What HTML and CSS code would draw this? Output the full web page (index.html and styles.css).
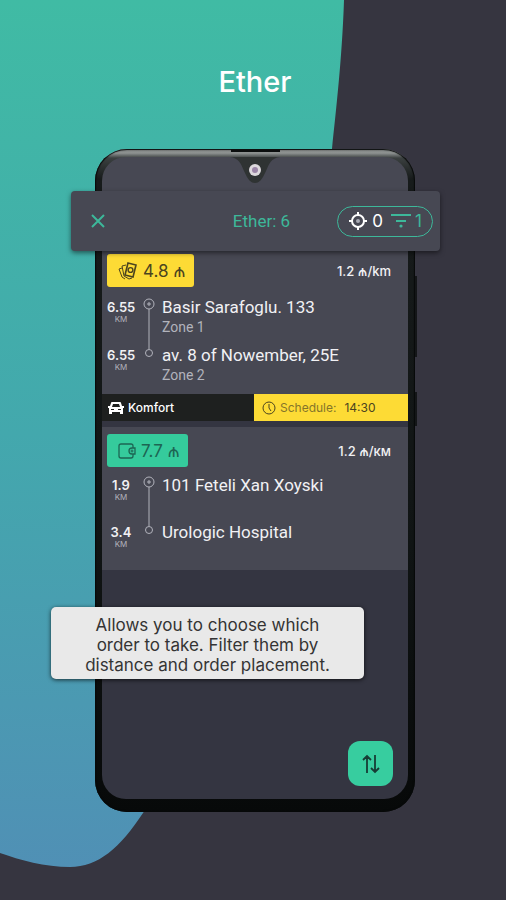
FILE: index.html
```html
<!DOCTYPE html>
<html lang="en">
<head>
    <meta charset="UTF-8">
    <meta name="viewport" content="width=device-width, initial-scale=1.0">
    <title>Ether</title>
    <link rel="stylesheet" href="styles.css">
</head>
<body>
    <!-- Background shape -->
    <svg class="backdrop" viewBox="0 0 506 900" preserveAspectRatio="none" aria-hidden="true">
        <defs>
            <linearGradient id="sea" x1="0" y1="0" x2="0" y2="1">
                <stop offset="0" stop-color="#40bba4"/>
                <stop offset="0.5" stop-color="#43a8ad"/>
                <stop offset="1" stop-color="#5090b5"/>
            </linearGradient>
        </defs>
        <path fill="url(#sea)" d="M0 0H344C342 60 336 110 332 149C300 450 200 740 143 813C120 848 98 867 70 867C45 867 20 860 0 853Z"/>
    </svg>

    <main class="page">
        <h1>Ether</h1>

        <div class="phone">
            <svg class="notch" viewBox="0 0 60 36" aria-hidden="true">
                <path fill="#2f3333" d="M5 8C14 9 16 15 19 22C23 31 26 34 30 34S37 31 41 22C44 15 46 9 55 8Z"/>
                <rect x="6" y="0" width="49" height="3" fill="#0c0f0f"/>
                <circle cx="30" cy="21" r="6" fill="#dcd8dc"/>
                <circle cx="30" cy="21" r="3" fill="#9a84a6"/>
            </svg>

            <div class="screen">
                <!-- Top Bar -->
                <header class="top-bar">
                    <button class="close" aria-label="Close">
                        <svg width="14" height="14" viewBox="0 0 14 14"><path d="M1 1L13 13M13 1L1 13" stroke="currentColor" stroke-width="2"/></svg>
                    </button>
                    <h2>Ether: 6</h2>
                    <button class="filter">
                        <svg width="20" height="20" viewBox="0 0 20 20" fill="none" stroke="#fff">
                            <circle cx="10" cy="10" r="6" stroke-width="2"/>
                            <path d="M10 1V5M10 15V19M1 10H5M15 10H19" stroke-width="2"/>
                            <circle cx="10" cy="10" r="2" fill="#a9abb5" stroke="none"/>
                        </svg>
                        <span class="near">0</span>
                        <svg class="funnel" width="20" height="16" viewBox="0 0 20 16" fill="none" stroke="currentColor" stroke-width="2">
                            <path d="M0 2H20M5 8H15"/><circle cx="10" cy="13" r="1.6" fill="currentColor" stroke="none"/>
                        </svg>
                        <span>1</span>
                    </button>
                </header>

                <!-- Orders -->
                <article class="order">
                    <div class="order-head">
                        <span class="price cash">
                            <svg width="20" height="20" viewBox="0 0 20 20" fill="none" stroke="currentColor">
                                <path d="M10 2L18 4L15 16L7 14Z" stroke-width="1.6"/>
                                <circle cx="12.5" cy="9" r="2.4" stroke-width="1.4"/>
                                <path d="M8 4L4 5L6 15L11 18L14 17M4 7L1 8L4 16L7 18" stroke-width="1"/>
                            </svg>
                            4.8 ₼
                        </span>
                        <span class="rate">1.2 ₼/km</span>
                    </div>
                    <div class="route">
                        <div class="distances">
                            <p>6.55<small>KM</small></p>
                            <p>6.55<small>KM</small></p>
                        </div>
                        <svg class="track" width="12" height="60" viewBox="0 0 12 60" fill="none" stroke="currentColor">
                            <circle cx="6" cy="6" r="5"/><path d="M6 4V8M4 6H8M6 11V51"/><circle cx="6" cy="55" r="3.5"/>
                        </svg>
                        <div class="stops">
                            <p>Basir Sarafoglu. 133<small>Zone 1</small></p>
                            <p>av. 8 of Nowember, 25E<small>Zone 2</small></p>
                        </div>
                    </div>
                </article>

                <div class="service">
                    <span class="tariff">
                        <svg width="16" height="14" viewBox="0 0 16 14" fill="currentColor">
                            <path fill-rule="evenodd" d="M4 1H12Q13 1 13 2L14 5H16V7H15V13H12V11H4V13H1V7H0V5H2L3 2Q3 1 4 1ZM5 3L4 6H12L11 3ZM3 8V9H6V8ZM10 8V9H13V8Z"/>
                        </svg>
                        Komfort
                    </span>
                    <span class="schedule">
                        <svg width="14" height="14" viewBox="0 0 14 14" fill="none" stroke="currentColor">
                            <circle cx="7" cy="7" r="6"/><path d="M7 3V7L9 10"/>
                        </svg>
                        <span>Schedule:</span>
                        <time>14:30</time>
                    </span>
                </div>

                <article class="order card-order">
                    <div class="order-head">
                        <span class="price card">
                            <svg width="18" height="16" viewBox="0 0 18 16" fill="none" stroke="currentColor">
                                <path d="M15 5V3Q15 1 13 1H3Q1 1 1 3V13Q1 15 3 15H13Q15 15 15 13V11M17 5H14Q11 5 11 8T14 11H17Z" stroke-width="1.3"/>
                                <circle cx="14" cy="8" r="1"/>
                            </svg>
                            7.7 ₼
                        </span>
                        <span class="rate">1.2 ₼/км</span>
                    </div>
                    <div class="route">
                        <div class="distances">
                            <p>1.9<small>KM</small></p>
                            <p>3.4<small>KM</small></p>
                        </div>
                        <svg class="track" width="12" height="60" viewBox="0 0 12 60" fill="none" stroke="currentColor">
                            <circle cx="6" cy="6" r="5"/><path d="M6 4V8M4 6H8M6 11V50"/><circle cx="6" cy="54" r="3.5"/>
                        </svg>
                        <div class="stops">
                            <p>101 Feteli Xan Xoyski</p>
                            <p>Urologic Hospital</p>
                        </div>
                    </div>
                </article>

                <button class="sort" aria-label="Sort orders">
                    <svg width="18" height="20" viewBox="0 0 18 20" fill="none" stroke="currentColor" stroke-width="1.8">
                        <path d="M5 19V2M1 6L5 2L9 6M13 1V18M9 14L13 18L17 14"/>
                    </svg>
                </button>
            </div>

            <p class="caption">Allows you to choose which<br>order to take. Filter them by<br>distance and order placement.</p>
        </div>
    </main>
</body>
</html>
```
FILE: styles.css
```css
/* Global Reset */
* {
    margin: 0;
    padding: 0;
    box-sizing: border-box;
}

body {
    position: relative;
    min-height: 100vh;
    background-color: #363540;
    color: #fff;
    font-family: 'Inter', 'Liberation Sans', sans-serif;
}

button {
    border: none;
    background: none;
    font: inherit;
    color: inherit;
    cursor: pointer;
}

svg {
    display: block;
    flex-shrink: 0;
}

small {
    display: block;
}

.backdrop {
    position: absolute;
    top: 0;
    left: 0;
    width: 100%;
    height: 100%;
}

.page {
    position: relative;
    padding: 64px 91px 88px 95px;
}

h1 {
    margin-bottom: 49px;
    font-size: 29px;
    font-weight: 500;
    line-height: 36px;
    text-align: center;
}

/* Phone */
.phone {
    position: relative;
    padding: 8px 7px 13px;
    border-radius: 32px;
    background: linear-gradient(#7d8180 0, #8f9392 4px, #3b4040 9px, #171b1b 30px, #101414 60%, #070909 100%);
    box-shadow: inset 0 0 1px 1px #070909;
}

/* Side keys */
.phone::before,
.phone::after {
    content: "";
    position: absolute;
    right: -2px;
    width: 2px;
    background-color: #141618;
}

.phone::before {
    top: 127px;
    height: 81px;
}

.phone::after {
    top: 243px;
    height: 34px;
}

.notch {
    position: absolute;
    top: 0;
    left: 50%;
    width: 60px;
    margin-left: -30px;
    z-index: 1;
}

.screen {
    display: flex;
    flex-direction: column;
    min-height: 642px;
    padding-top: 34px;
    border-radius: 24px;
    background: linear-gradient(#474853 100px, #343541 100px);
}

/* Top Bar */
.top-bar {
    position: relative;
    display: grid;
    grid-template-columns: 1fr auto 1fr;
    align-items: center;
    height: 60px;
    margin: 0 -32px 0 -31px;
    padding: 0 7px 0 19px;
    border-radius: 4px;
    background-color: #474853;
    box-shadow: 0 2px 5px rgba(0, 0, 0, 0.5);
    color: #3db89a;
}

.close {
    justify-self: start;
    padding: 1px;
}

.top-bar h2 {
    font-family: 'Roboto', sans-serif;
    font-size: 17px;
    font-weight: 400;
}

.filter {
    display: flex;
    align-items: center;
    justify-self: end;
    gap: 4px;
    height: 31px;
    padding: 0 10px;
    border: 1px solid #3db89a;
    border-radius: 16px;
    font-size: 17px;
}

.near {
    color: #fff;
}

.funnel {
    margin-left: 4px;
}

/* Orders */
.order {
    padding: 3px 17px 2px 5px;
    background-color: #474853;
    color: #f1f1f4;
}

.order-head {
    display: flex;
    align-items: center;
    justify-content: space-between;
    margin-bottom: 9px;
}

.price {
    display: flex;
    align-items: center;
    gap: 5px;
    height: 33px;
    padding: 0 8px 0 11px;
    border-radius: 3px;
    font-size: 17px;
}

.cash {
    background-color: #fddb35;
    color: #4b441f;
}

.card {
    background-color: #35cb9c;
    color: #1d6553;
}

.rate {
    font-size: 13px;
    font-weight: 500;
}

.route {
    display: flex;
}

.distances {
    width: 28px;
    font-size: 13px;
    font-weight: 600;
    line-height: 16px;
    text-align: center;
}

.distances p {
    height: 48px;
    padding-top: 3px;
}

.distances small {
    color: #b2b3bc;
    font-size: 8px;
    font-weight: 400;
    line-height: 9px;
}

.track {
    margin: 2px 7px 0 8px;
    color: #b2b3bc;
}

.stops {
    font-family: 'Roboto', sans-serif;
    font-size: 17px;
    line-height: 22px;
    white-space: nowrap;
}

.stops p {
    height: 48px;
}

.stops small {
    color: #b2b3bc;
    font-size: 14px;
    line-height: 18px;
}

/* Service Row */
.service {
    display: flex;
    height: 27px;
    margin-bottom: 6px;
    background-color: #1e201f;
    font-size: 12px;
}

.tariff,
.schedule {
    display: flex;
    flex: 1;
    align-items: center;
    gap: 4px;
    padding-left: 6px;
}

.tariff {
    font-weight: 500;
}

.schedule {
    padding-left: 8px;
    background-color: #fddb35;
    color: #4b441f;
}

.schedule span {
    color: #85752a;
}

.schedule time {
    margin-left: 4px;
}

.card-order {
    padding-top: 7px;
}

.card-order .order-head {
    margin-bottom: 7px;
}

.card-order .distances p,
.card-order .stops p {
    height: 47px;
}

.sort {
    display: grid;
    place-items: center;
    width: 45px;
    height: 45px;
    margin: auto 15px 13px auto;
    border-radius: 12px;
    background-color: #37cd9f;
    color: #173c35;
}

/* Caption */
.caption {
    position: absolute;
    top: 458px;
    left: -44px;
    right: 51px;
    padding: 8px 0 4px;
    border-radius: 5px;
    background-color: #e9e9e9;
    box-shadow: 0 1px 4px rgba(0, 0, 0, 0.7);
    color: #343434;
    font-size: 17px;
    line-height: 20px;
    text-align: center;
}
```
